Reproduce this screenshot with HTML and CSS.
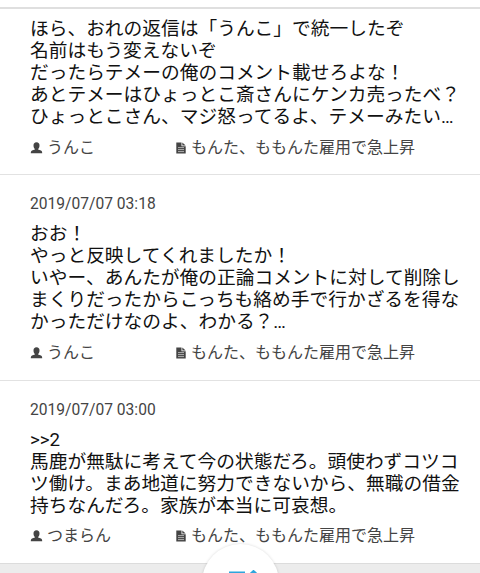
FILE: index.html
```
<!DOCTYPE html>
<html lang="ja">
<head>
  <meta charset="UTF-8">
  <title>コメント一覧</title>
  <link rel="stylesheet" href="styles.css">
</head>
<body>

<!-- Shared icons -->
<svg class="icon-defs" width="0" height="0">
  <symbol id="icon-user" viewBox="0 0 12 12">
    <path d="M6 0.3C4 0.3 3 1.6 3 3.4C3 5 3.7 6.3 4.4 7V7.6L1.5 8.4C0.6 8.8 0.3 9.6 0.3 11.3H11.7C11.7 9.6 11.4 8.800 10.5 8.4L7.6 7.6V7C8.3 6.3 9 5 9 3.4C9 1.6 8 0.3 6 0.3Z"/>
  </symbol>
  <symbol id="icon-file" viewBox="0 0 10 12">
    <path d="M0.3 0.5H5.5V4.3H9.7V11.5H0.3Z"/>
    <path d="M6.3 0.5L9.7 3.5H6.3Z"/>
    <path class="file-lines" d="M2 5.6H8M2 7.6H8M2 9.6H8"/>
  </symbol>
</svg>

<div class="page">
  <div class="top-bar"></div>

  <!-- Comment list -->
  <div class="comment-list">
    <div class="comment first">
      <div class="comment-text">ほら、おれの返信は「うんこ」で統一したぞ<br>名前はもう変えないぞ<br>だったらテメーの俺のコメント載せろよな！<br>あとテメーはひょっとこ斎さんにケンカ売ったべ？<br>ひょっとこさん、マジ怒ってるよ、テメーみたい…</div>
      <div class="comment-meta">
        <div class="author"><svg class="icon-user"><use href="#icon-user"/></svg>うんこ</div>
        <div class="article"><svg class="icon-file"><use href="#icon-file"/></svg>もんた、ももんた雇用で急上昇</div>
      </div>
    </div>

    <div class="comment">
      <div class="comment-date">2019/07/07 03:18</div>
      <div class="comment-text">おお！<br>やっと反映してくれましたか！<br>いやー、あんたが俺の正論コメントに対して削除し<br>まくりだったからこっちも絡め手で行かざるを得な<br>かっただけなのよ、わかる？…</div>
      <div class="comment-meta">
        <div class="author"><svg class="icon-user"><use href="#icon-user"/></svg>うんこ</div>
        <div class="article"><svg class="icon-file"><use href="#icon-file"/></svg>もんた、ももんた雇用で急上昇</div>
      </div>
    </div>

    <div class="comment last">
      <div class="comment-date">2019/07/07 03:00</div>
      <div class="comment-text">&gt;&gt;2<br>馬鹿が無駄に考えて今の状態だろ。頭使わずコツコ<br>ツ働け。まあ地道に努力できないから、無職の借金<br>持ちなんだろ。家族が本当に可哀想。</div>
      <div class="comment-meta">
        <div class="author"><svg class="icon-user"><use href="#icon-user"/></svg>つまらん</div>
        <div class="article"><svg class="icon-file"><use href="#icon-file"/></svg>もんた、ももんた雇用で急上昇</div>
      </div>
    </div>
  </div>

  <!-- Floating round button -->
  <div class="float-btn">
    <svg width="34" height="30" viewBox="0 0 34 30">
      <path d="M2 2.5H18M2 9H14M2 15.5H14"/>
      <path d="M20 7L26.5 1L33 7M26.5 2V16"/>
    </svg>
  </div>
</div>

</body>
</html>
```
FILE: styles.css
```
body {
  margin: 0;
  background-color: #ececec;
  font-family: Roboto, "Noto Sans CJK JP", sans-serif;
}
.icon-defs {
  position: absolute;
}
.page {
  position: relative;
  height: 573px;
  overflow: hidden;
}
.top-bar {
  height: 7px;
  background-color: #fff;
  border-bottom: 2px solid #dfdfdf;
}
.comment {
  padding: 19px 0 17px 30px;
  background-color: #fff;
  border-bottom: 1px solid #e2e2e2;
}
.comment.first {
  padding-top: 9px;
  padding-bottom: 16px;
}
.comment.last {
  border-bottom-color: #dcdcdc;
}
.comment.last .comment-meta {
  margin-top: 9px;
}
.comment-date {
  margin-bottom: 9px;
  font-size: 15.6px;
  line-height: 20px;
  color: #444;
}
.comment-text {
  font-size: 18.73px;
  line-height: 22px;
  color: #111;
  white-space: nowrap;
}
.comment-meta {
  display: flex;
  margin-top: 10px;
  font-size: 16px;
  line-height: 20px;
  color: #444;
}
.author,
.article {
  display: flex;
  align-items: center;
  white-space: nowrap;
}
.author {
  width: 146px;
}
.icon-user {
  width: 13px;
  height: 12px;
  margin: 0 4px 1px 0;
  fill: #444;
}
.icon-file {
  width: 10px;
  height: 12px;
  margin: 0 5px 1px 0;
  fill: #444;
}
.file-lines {
  stroke: #ccc;
  stroke-width: 0.8;
}
.float-btn {
  position: absolute;
  left: 202px;
  top: 544px;
  width: 77px;
  height: 77px;
  border-radius: 50%;
  background-color: #fff;
  box-shadow: 0 0 3px rgba(0, 0, 0, 0.15);
}
.float-btn svg {
  display: block;
  margin: 26px 0 0 25px;
  fill: none;
  stroke: #2da5dc;
  stroke-width: 2;
}
```
